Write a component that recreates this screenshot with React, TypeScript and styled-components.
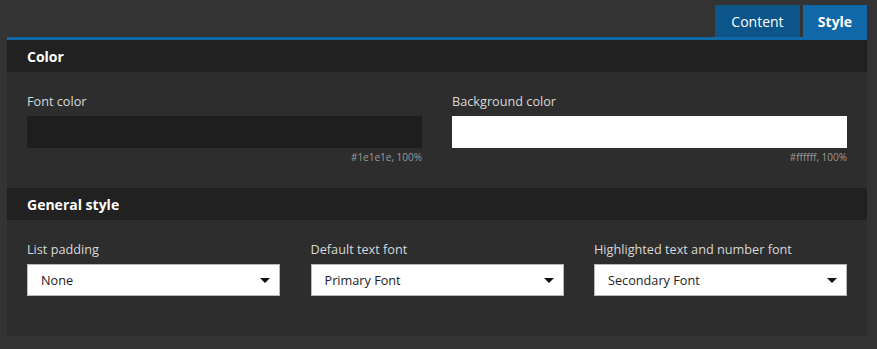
import React from "react";
import styled, {createGlobalStyle} from "styled-components";

const GlobalStyle = createGlobalStyle`
  html, body {
    margin: 0;
    padding: 0;
    background: #333333;
    font-family: 'Open Sans', 'Noto Sans', sans-serif;
  }
`;

const tabs = [
    {label: "Content", active: false},
    {label: "Style", active: true},
];

const fontOptions = [
    {label: "List padding", value: "None"},
    {label: "Default text font", value: "Primary Font"},
    {label: "Highlighted text and number font", value: "Secondary Font"},
];

const App = () => {
    return (
        <>
            <GlobalStyle/>
            <Page>
                <TabBar>
                    {tabs.map(t => (
                        <Tab key={t.label} $active={t.active}>{t.label}</Tab>
                    ))}
                </TabBar>
                <Panel>
                    <SectionHeader>Color</SectionHeader>
                    <SectionBody $bottom={24}>
                        <Grid $cols={2}>
                            <Field>
                                <Label>Font color</Label>
                                <Swatch $color="#1e1e1e"/>
                                <SwatchInfo>#1e1e1e, 100%</SwatchInfo>
                            </Field>
                            <Field>
                                <Label>Background color</Label>
                                <Swatch $color="#ffffff"/>
                                <SwatchInfo>#ffffff, 100%</SwatchInfo>
                            </Field>
                        </Grid>
                    </SectionBody>
                    <SectionHeader>General style</SectionHeader>
                    <SectionBody $bottom={40}>
                        <Grid $cols={3}>
                            {fontOptions.map(o => (
                                <Field key={o.label}>
                                    <Label>{o.label}</Label>
                                    <Select>
                                        <span>{o.value}</span>
                                        <Caret/>
                                    </Select>
                                </Field>
                            ))}
                        </Grid>
                    </SectionBody>
                </Panel>
            </Page>
        </>
    )
};

const Page = styled.div`
  padding: 5px 10px 13px 7px;
`;

const TabBar = styled.div`
  display: flex;
  justify-content: flex-end;
  gap: 3px;
  height: 32px;
`;

const Tab = styled.div<{ $active: boolean }>`
  display: flex;
  align-items: center;
  justify-content: center;
  padding: 0 ${p => p.$active ? 14 : 15}px;
  min-width: ${p => p.$active ? 36 : 55}px;
  background: ${p => p.$active ? "#1068a9" : "#0b5589"};
  color: #ffffff;
  font-size: 14px;
  font-weight: ${p => p.$active ? 700 : 400};
`;

const Panel = styled.div`
  background: #2d2d2d;
  border-top: 3px solid #1068a9;
`;

const SectionHeader = styled.div`
  height: 32px;
  display: flex;
  align-items: center;
  padding: 0 20px;
  background: #212121;
  color: #ffffff;
  font-size: 14px;
  font-weight: 700;
`;

const SectionBody = styled.div<{ $bottom: number }>`
  padding: 20px 20px ${p => p.$bottom}px;
`;

const Grid = styled.div<{ $cols: number }>`
  display: grid;
  grid-template-columns: repeat(${p => p.$cols}, 1fr);
  column-gap: ${p => p.$cols === 2 ? 30 : 30.5}px;
`;

const Field = styled.div`
  display: flex;
  flex-direction: column;
`;

const Label = styled.div`
  color: #d8d8d8;
  font-size: 12.7px;
  line-height: 19px;
  margin-bottom: 5px;
`;

const Swatch = styled.div<{ $color: string }>`
  height: 32px;
  background: ${p => p.$color};
`;

const SwatchInfo = styled.div`
  text-align: right;
  color: #9a9a9a;
  font-size: 10px;
  line-height: 14px;
  margin-top: 2px;
`;

const Select = styled.div`
  box-sizing: border-box;
  height: 32px;
  display: flex;
  align-items: center;
  justify-content: space-between;
  padding: 0 9px 0 13px;
  background: #ffffff;
  border: 1px solid #b8b8b8;
  color: #222222;
  font-size: 12.7px;
`;

const Caret = styled.span`
  width: 0;
  height: 0;
  border-left: 5px solid transparent;
  border-right: 5px solid transparent;
  border-top: 5px solid #111111;
`;

export default App;
